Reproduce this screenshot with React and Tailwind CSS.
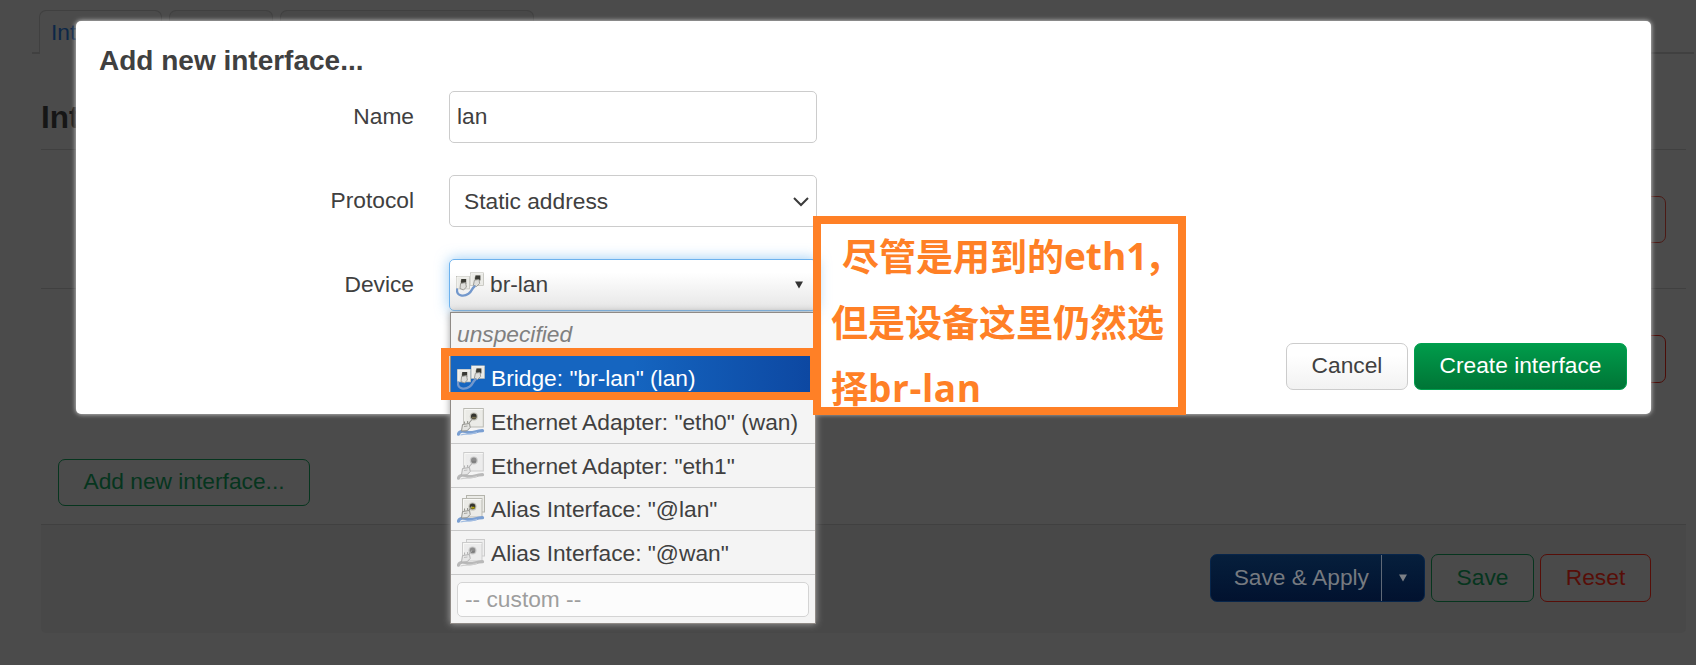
import React from 'react';

function Socket({ x, y, s = 1, muted, lit }) {
  return (
    <g transform={`translate(${x} ${y}) scale(${s})`}>
      <rect x="0.5" y="0.5" width="19.5" height="18.5" fill={muted ? '#ececec' : '#ebebe7'} stroke={muted ? '#cccccc' : '#b9b9b2'} />
      <path d="M1.5 18.5V1.5H19.5" fill="none" stroke="#f8f8f6" />
      <circle cx="10.5" cy="8.6" r="4" fill={muted ? '#c9c9c9' : '#bdbcb2'} />
      <circle cx="10.5" cy="8.4" r="2.8" fill={muted ? '#8c8c8c' : '#34342e'} />
      <rect x="8.6" y="8.8" width="4" height="1.8" fill={muted ? '#7d7d7d' : lit ? '#b8a800' : '#77704e'} />
    </g>
  );
}

function Plug({ muted }) {
  const edge = muted ? '#b2b2b2' : '#94948f';
  return (
    <g>
      <path d="M1.5 26.2C2.5 22.4 7 22.8 11 24.4C16 25.8 18 22.8 25.5 22.6" fill="none" stroke={muted ? '#b9b9b9' : '#7a9fd2'} strokeWidth="3.2" strokeLinecap="round" />
      <path d="M3.5 27C9 25.2 12 27.2 20 24.4" fill="none" stroke={muted ? '#cfcfcf' : '#a3bee2'} strokeWidth="1.2" />
      <path d="M5.5 16.5L12.5 15.5L13.2 19.5L10 22.8L4.5 23Z" fill={muted ? '#e6e6e6' : '#e4e4e1'} stroke={edge} strokeWidth="1" />
      <path d="M7.5 15.8V13.4M10.6 15.4V13M12 15L15 11.5" stroke={edge} strokeWidth="1.1" fill="none" />
      <path d="M7 18.5L10.5 18" stroke={edge} strokeWidth="0.8" />
    </g>
  );
}

function EthernetIcon({ muted }) {
  return (
    <svg className="h-7 w-7 shrink-0" viewBox="0 0 28 28">
      <Socket x={6.3} y={0} muted={muted} />
      <Plug muted={muted} />
    </svg>
  );
}

function AliasIcon({ muted }) {
  return (
    <svg className="h-7 w-7 shrink-0" viewBox="0 0 28 28">
      <rect x="9.5" y="0.5" width="18" height="16.5" fill={muted ? '#eeeeee' : '#ebebe7'} stroke={muted ? '#cccccc' : '#b4b4ac'} />
      <Socket x={5} y={3} muted={muted} lit />
      <Plug muted={muted} />
    </svg>
  );
}

function BridgeIcon() {
  return (
    <svg className="h-7 w-7 shrink-0" viewBox="0 0 28 28">
      <Socket x={0} y={5} s={0.68} />
      <Socket x={14} y={1.5} s={0.68} />
      <rect x="5.2" y="8" width="5" height="5" fill="#3a3a34" />
      <rect x="19.4" y="4.4" width="5" height="5" fill="#3a3a34" />
      <path d="M4.6 12.4L9.6 11.6L10.4 16L7.5 19L4 17.5Z" fill="#dededb" stroke="#94948f" strokeWidth="0.9" />
      <path d="M18.4 9.2L23 8.4L23.6 12.5L20.6 15.5L17.4 14.3Z" fill="#dededb" stroke="#94948f" strokeWidth="0.9" />
      <path d="M1 18.5C0.5 25.5 8 25.8 12.5 22.8C16 20.6 15.5 17.5 18.5 15.5" fill="none" stroke="#7398cc" strokeWidth="2.3" strokeLinecap="round" />
    </svg>
  );
}

function Field({ label, children }) {
  return (
    <div className="flex h-[52px] items-start">
      <label className="w-[314px] shrink-0 text-right leading-[50px]">{label}</label>
      <div className="relative ml-[35px] h-[52px] w-[368px]">{children}</div>
    </div>
  );
}

function Option({ icon, children, className = '' }) {
  return (
    <li className={`flex items-center gap-[6px] border-b border-[#c8c8c8] pl-[6px] leading-[42px] ${className}`}>
      {icon}
      <span>{children}</span>
    </li>
  );
}

function DeviceMenu() {
  return (
    <ul className="absolute left-[1px] top-[53px] z-10 h-[312px] w-[366px] border border-[#8f8a86] bg-[#f4f4f4] whitespace-nowrap shadow-[0_0_7px_#a0a0a0]">
      <li className="h-[43px] border-b border-[#c8c8c8] pl-[6px] leading-[42px] text-[#808080] italic">unspecified</li>
      <Option icon={<BridgeIcon />} className="h-[44px] bg-linear-to-r from-[#1565c0] from-50% to-[#0d47a1] text-white">
        Bridge: "br-lan" (lan)
      </Option>
      <Option icon={<EthernetIcon />} className="h-[44px]">Ethernet Adapter: "eth0" (wan)</Option>
      <Option icon={<EthernetIcon muted />} className="h-[44px]">Ethernet Adapter: "eth1"</Option>
      <Option icon={<AliasIcon />} className="h-[43px]">Alias Interface: "@lan"</Option>
      <Option icon={<AliasIcon muted />} className="h-[44px]">Alias Interface: "@wan"</Option>
      <li className="px-[6px] pt-[7px]">
        <div className="h-[35px] rounded-[5px] border border-[#d4d4d4] bg-[#fcfcfc] pl-[7px] leading-[32px] text-[#9e9e9e]">-- custom --</div>
      </li>
    </ul>
  );
}

function Modal() {
  return (
    <section className="absolute left-[76px] top-[21px] h-[393px] w-[1575px] rounded-[5px] bg-white px-6 pt-[24px] shadow-[0_0_5px_#dddddd]">
      <h4 className="-ml-px text-[28px] leading-8 font-bold">Add new interface...</h4>
      <div className="mt-[14px] flex flex-col gap-8">
        <Field label="Name">
          <div className="h-full rounded-[5px] border border-[#cccccc] pl-[7px] leading-[48px]">lan</div>
        </Field>
        <Field label="Protocol">
          <div className="flex h-full items-start justify-between rounded-[5px] border border-[#cccccc] pr-[7px] pl-[14px] leading-[50px]">
            Static address
            <svg className="mt-[20px] h-[12px] w-[16px]" viewBox="0 0 16 12" fill="none" stroke="#3b3b3b" strokeWidth="2">
              <path d="M1 2L8 9L15 2" />
            </svg>
          </div>
        </Field>
        <Field label="Device">
          <div className="flex h-full items-center rounded-[5px] border border-[#6cb2ee] bg-linear-to-b from-white from-25% to-[#e6e6e6] pr-[13px] pl-[6px] leading-[48px] shadow-[0_0_14px_rgba(82,168,236,0.6)]">
            <BridgeIcon />
            <span className="ml-[6px] flex-1 pb-[2px]">br-lan</span>
            <svg className="h-[8px] w-[8px]" viewBox="0 0 8 8"><path d="M0 0.5H8L4 7.5Z" fill="#333333" /></svg>
          </div>
          <DeviceMenu />
        </Field>
      </div>
      <div className="mt-8 flex justify-end gap-[6px] leading-[43px]">
        <button className="h-[47px] w-[122px] rounded-[7px] border border-[#cccccc] bg-linear-to-b from-white from-25% to-[#f2f2f2] pb-[2px]">Cancel</button>
        <button className="h-[47px] w-[213px] rounded-[7px] border border-[#00a04f] bg-linear-to-b from-[#009c4b] to-[#007536] pb-[2px] text-white">Create interface</button>
      </div>
    </section>
  );
}

function Page() {
  return (
    <div className="flex h-full flex-col">
      <nav className="ml-8 mr-[2px] flex h-[54px] shrink-0 items-start gap-[7px] border-b-2 border-[#404040] pt-[10px] pl-[7px]">
        <div className="h-[44px] w-[123px] rounded-t-[7px] border border-b-0 border-[#404040] bg-[#4b4b4b] pl-[11px] leading-[43px] text-[#0d2747]">Interfaces</div>
        <div className="h-[42px] w-[104px] rounded-t-[7px] border border-b-0 border-[#404040] bg-[#484848]" />
        <div className="h-[42px] w-[254px] rounded-t-[7px] border border-b-0 border-[#404040] bg-[#484848]" />
      </nav>
      <main className="ml-[41px] mr-[10px] flex flex-col">
        <h2 className="h-[96px] border-b border-[#404040] pt-[45px] text-[31.5px] leading-[36px] font-bold text-[#161616]">Interfaces</h2>
        <div className="flex h-[139px] items-start justify-end border-b border-[#404040] pt-[46px] pr-5">
          <div className="h-[47px] w-[100px] rounded-[7px] border border-[#4b1a15]" />
        </div>
        <div className="flex h-[170px] items-start justify-end pt-[46px] pr-5">
          <div className="h-[48px] w-[100px] rounded-[7px] border border-[#4b0d08]" />
        </div>
        <div className="h-[65px] pl-[17px]">
          <button className="h-[47px] w-[252px] rounded-[7px] border border-[#06351e] pb-[2px] leading-[43px] text-[#06351e]">Add new interface...</button>
        </div>
        <footer className="flex h-[109px] justify-end gap-[6px] rounded-b-[5px] border-t border-[#404040] bg-[#484848] pt-[29px] pr-[35px] leading-[45px]">
          <div className="flex h-[48px] w-[215px] rounded-[7px] border border-[#07254a] bg-linear-to-b from-[#061f3c] to-[#02122f] text-[#767a80]">
            <span className="flex h-full w-[171px] justify-end border-r border-[#5f6977] pr-[12px]">Save &amp; Apply</span>
            <span className="flex flex-1 items-center justify-center">
              <svg className="h-[8px] w-[8px]" viewBox="0 0 8 8"><path d="M0 0.5H8L4 7.5Z" fill="#7c8086" /></svg>
            </span>
          </div>
          <button className="h-[48px] w-[103px] rounded-[7px] border border-[#06351e] bg-[#4a4a4a] pb-[2px] text-[#06351e]">Save</button>
          <button className="h-[48px] w-[111px] rounded-[7px] border border-[#570e08] bg-[#4a4a4a] pb-[2px] text-[#570e08]">Reset</button>
        </footer>
      </main>
    </div>
  );
}

export default function App() {
  return (
    <div className="relative h-[665px] w-[1696px] overflow-hidden bg-[#4b4b4b] font-['Liberation_Sans',Arial,sans-serif] text-[22.75px] text-[#404040]">
      <Page />
      <Modal />
      <div className="absolute left-[441px] top-[348px] z-20 h-[52px] w-[377px] border-8 border-[#ff8026]" />
      <div className="absolute left-[813px] top-[216px] z-20 h-[199px] w-[373px] border-8 border-[#ff8026] pl-[10px] font-['Open_Sans','Noto_Sans_CJK_SC',sans-serif] text-[37px] leading-[66px] font-bold whitespace-nowrap text-[#ff8026]">
        <p className="pl-[11px]">尽管是用到的<span className="relative -top-px">eth1</span><span className="-ml-[3px]">，</span></p>
        <p>但是设备这里仍然选</p>
        <p>择<span className="relative -top-px tracking-[0.6px]">br-lan</span></p>
      </div>
    </div>
  );
}
